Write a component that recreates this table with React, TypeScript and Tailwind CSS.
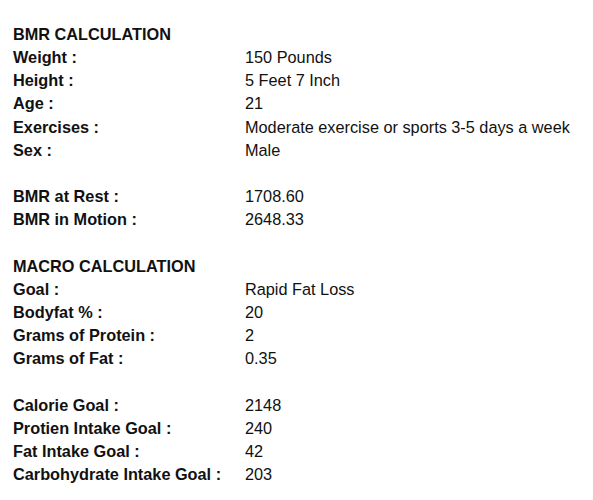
const sections: { title?: string; rows: [string, string][] }[] = [
  {
    title: 'BMR CALCULATION',
    rows: [
      ['Weight :', '150 Pounds'],
      ['Height :', '5 Feet 7 Inch'],
      ['Age :', '21'],
      ['Exercises :', 'Moderate exercise or sports 3-5 days a week'],
      ['Sex :', 'Male'],
    ],
  },
  {
    rows: [
      ['BMR at Rest :', '1708.60'],
      ['BMR in Motion :', '2648.33'],
    ],
  },
  {
    title: 'MACRO CALCULATION',
    rows: [
      ['Goal :', 'Rapid Fat Loss'],
      ['Bodyfat % :', '20'],
      ['Grams of Protein :', '2'],
      ['Grams of Fat :', '0.35'],
    ],
  },
  {
    rows: [
      ['Calorie Goal :', '2148'],
      ['Protien Intake Goal :', '240'],
      ['Fat Intake Goal :', '42'],
      ['Carbohydrate Intake Goal :', '203'],
    ],
  },
];

export default function App() {
  return (
    <div
      className="w-[593px] h-[500px] bg-white text-[#111] pl-[13px] pt-[23px] text-[16.3px] leading-[23.16px]"
      style={{ fontFamily: '"Liberation Sans", Arial, sans-serif' }}
    >
      {sections.map((s, i) => (
        <div key={i} className="flex flex-col mb-[23.16px]">
          {s.title && <div className="font-bold">{s.title}</div>}
          {s.rows.map(([label, value]) => (
            <div key={label} className="grid grid-cols-[232px_1fr]">
              <span className="font-bold">{label}</span>
              <span>{value}</span>
            </div>
          ))}
        </div>
      ))}
    </div>
  );
}
